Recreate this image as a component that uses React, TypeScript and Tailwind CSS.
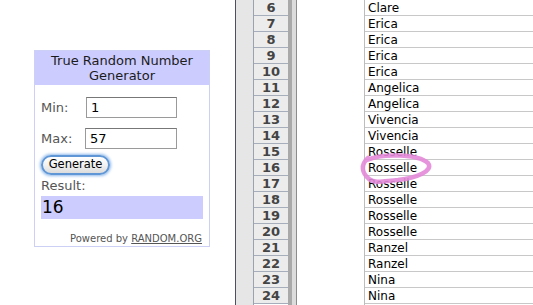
import React from 'react';

const rows: [number, string][] = [
    [6, 'Clare'],
    [7, 'Erica'],
    [8, 'Erica'],
    [9, 'Erica'],
    [10, 'Erica'],
    [11, 'Angelica'],
    [12, 'Angelica'],
    [13, 'Vivencia'],
    [14, 'Vivencia'],
    [15, 'Rosselle'],
    [16, 'Rosselle'],
    [17, 'Rosselle'],
    [18, 'Rosselle'],
    [19, 'Rosselle'],
    [20, 'Rosselle'],
    [21, 'Ranzel'],
    [22, 'Ranzel'],
    [23, 'Nina'],
    [24, 'Nina'],
];

/* ======================
   乱数ウィジェット
====================== */
const RandomWidget: React.FC = () => {
    return (
        <div className="ml-[34px] mt-[50px] w-[176px] h-[197px] border border-[#cdd0f5] flex flex-col font-['DejaVu_Sans',sans-serif]">
            <div className="bg-[#ccccff] h-[34px] flex flex-col items-center justify-center text-[13px] leading-[15px] text-[#1c1c1c]">
                <span>True Random Number</span>
                <span>Generator</span>
            </div>
            <div className="px-[6px] pt-[12px] flex flex-col">
                <div className="flex items-center h-[21px]">
                    <span className="w-[45px] text-[13px] text-[#555]">Min:</span>
                    <div className="w-[91px] h-[21px] border border-[#9a9a9a] border-t-[#777] bg-white text-[13px] pl-[4px] leading-[19px] text-black">1</div>
                </div>
                <div className="flex items-center h-[21px] mt-[10px]">
                    <span className="w-[44px] text-[13px] text-[#555]">Max:</span>
                    <div className="w-[92px] h-[21px] border border-[#9a9a9a] border-t-[#777] bg-white text-[13px] pl-[4px] leading-[19px] text-black">57</div>
                </div>
                <div className="mt-[6px] flex">
                    <div className="w-[69px] h-[20px] rounded-full border-2 border-[#5f97d6] shadow-[0_0_3px_1px_#8fb9ea] bg-gradient-to-b from-white via-[#f2f2f2] to-[#dcdcdc] flex items-center justify-center text-[11.5px] text-black">
                        Generate
                    </div>
                </div>
                <span className="mt-[3px] text-[13px] text-[#555] leading-[16px]">Result:</span>
                <div className="mt-[2px] w-[162px] h-[23px] bg-[#ccccff] text-[17px] leading-[23px] pl-[1px] text-black">16</div>
                <div className="mt-[12px] text-right pr-[1px] text-[10px] text-[#555]">
                    Powered by <span className="underline">RANDOM.ORG</span>
                </div>
            </div>
        </div>
    );
};

/* ======================
   スプレッドシート
====================== */
const Sheet: React.FC = () => {
    return (
        <div className="flex h-[305px] font-['DejaVu_Sans',sans-serif]">
            <div className="w-[1px] bg-[#4a5160]" />
            <div className="w-[18px] bg-[#e6e6e6] border-r border-[#9aa3b2]" />
            <div className="w-[34px] flex flex-col">
                {rows.map(([n]) => (
                    <div
                        key={n}
                        className="h-[16px] border-b border-[#a6aebb] bg-[#ececec] flex items-center justify-center text-[13px] font-bold text-[#444] leading-none"
                    >
                        {n}
                    </div>
                ))}
            </div>
            <div className="w-[4px] bg-[#a9a9a9]" />
            <div className="w-[4px] bg-[#dcdcdc]" />
            <div className="w-[1px] bg-[#8c8c8c]" />
            <div className="w-[67px] bg-white" />
            <div className="flex-1 flex flex-col border-l border-[#bdbdbd]">
                {rows.map(([n, name]) => (
                    <div
                        key={n}
                        className="h-[16px] border-b border-[#c8c8c8] pl-[3px] flex items-center text-[12px] text-black leading-none"
                    >
                        {name}
                    </div>
                ))}
            </div>
        </div>
    );
};

const App: React.FC = () => {
    return (
        <div className="w-[533px] h-[305px] bg-white flex relative overflow-hidden">
            <div className="w-[235px] shrink-0">
                <RandomWidget />
            </div>
            <div className="flex-1">
                <Sheet />
            </div>
            {/* ピンクの丸 */}
            <svg className="absolute left-0 top-0 pointer-events-none" width="533" height="305">
                <path
                    d="M367 160 C382 153, 418 154, 428 163 C434 171, 416 178, 398 180 C384 181, 375 184, 369 179 C362 173, 360 165, 368 158"
                    fill="none"
                    stroke="#e38ad9"
                    strokeWidth="4.5"
                    strokeLinecap="round"
                    opacity="0.9"
                />
            </svg>
        </div>
    );
};

export default App;
